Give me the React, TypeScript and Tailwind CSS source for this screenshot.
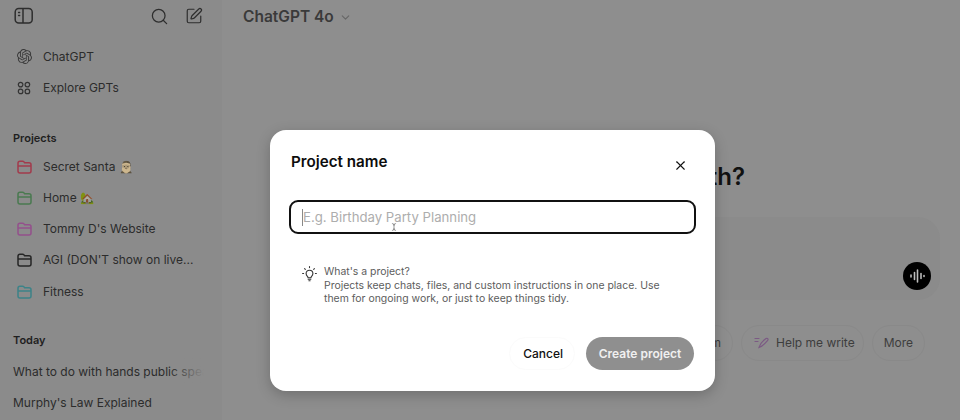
import React from "react";
import { X, Search, SquarePen, ChevronDown, TextCursor } from "lucide-react";
import { SiOpenai } from "react-icons/si";

const font = "font-['Inter','Liberation_Sans',sans-serif]";

function Folder({ color }: { color: string }) {
  return (
    <svg width="15" height="14" viewBox="0 0 15 14" fill="none" stroke={color} strokeWidth="1.5" strokeLinejoin="round" className="shrink-0">
      <path d="M1 3.2C1 2 1.8 1.2 3 1.2h2.6c.6 0 1 .2 1.4.7l.6.8h4.4c1.2 0 2 .8 2 2V11c0 1.2-.8 2-2 2H3c-1.2 0-2-.8-2-2z" />
      <path d="M1 6h13" />
    </svg>
  );
}

function Row({ icon, label }: { icon: React.ReactNode; label: React.ReactNode }) {
  return (
    <div className="flex h-[31.25px] items-center">
      <div className="box-content flex w-[26px] shrink-0 justify-start pl-[17px]">{icon}</div>
      <span className="truncate whitespace-nowrap text-[12px] text-[#2c2c2c]">{label}</span>
    </div>
  );
}

function Dots() {
  return (
    <svg width="14" height="14" viewBox="0 0 14 14" fill="none" stroke="#333" strokeWidth="1.2" className="shrink-0">
      <circle cx="3.6" cy="3.6" r="2.3" />
      <circle cx="10.4" cy="3.6" r="2.3" />
      <circle cx="3.6" cy="10.4" r="2.3" />
      <circle cx="10.4" cy="10.4" r="2.3" />
    </svg>
  );
}

function Bulb() {
  return (
    <svg width="15" height="16" viewBox="0 0 15 16" fill="none" stroke="#333" strokeWidth="1.1" strokeLinecap="round" className="mr-[7px] mt-[1px] shrink-0">
      <path d="M7.5 4.2c-2 0-3.4 1.5-3.4 3.3 0 1.2.6 2.1 1.3 2.8.4.4.6.8.6 1.4h3c0-.6.2-1 .6-1.4.7-.7 1.3-1.6 1.3-2.8 0-1.8-1.4-3.3-3.4-3.3z" />
      <path d="M6.2 13.2h2.6M6.9 14.8h1.2" />
      <path d="M7.5.6v1M2.6 2.6l.7.7M12.4 2.6l-.7.7M.6 7.5h1M13.4 7.5h1" />
    </svg>
  );
}

export default function App() {
  return (
    <div className={`relative flex h-[420px] w-[960px] overflow-hidden bg-[#8e8e8e] ${font}`}>
      <aside className="flex h-full w-[222px] shrink-0 flex-col bg-[#8b8b8b]">
        <div className="flex h-[32px] items-center pl-[14px] pr-[19px]">
          <svg width="20" height="18" viewBox="0 0 20 18" fill="none" stroke="#2e2e2e" strokeWidth="1.5">
            <rect x="1.2" y="1.5" width="17" height="14.5" rx="3.5" />
            <path d="M9 1.5v14.5" />
            <path d="M4.6 5.5h1M4.6 8.5h1" strokeLinecap="round" />
          </svg>
          <Search size={19} strokeWidth={1.6} className="ml-auto mr-[16px] text-[#2e2e2e]" />
          <SquarePen size={18} strokeWidth={1.6} className="text-[#2e2e2e]" />
        </div>
        <div className="mt-[9px]">
          <Row icon={<SiOpenai size={15} className="shrink-0 text-[#3a3a3a]" />} label="ChatGPT" />
          <Row icon={<Dots />} label="Explore GPTs" />
        </div>
        <div className="mt-[25px] flex h-[20px] items-center pl-[13px] text-[11px] font-semibold text-[#1f1f1f]">Projects</div>
        <div className="mt-[2.5px]">
          <Row icon={<Folder color="#a23b4c" />} label={<>Secret Santa <span className="text-[11.5px] sepia saturate-200 brightness-[0.62]">🎅</span></>} />
          <Row icon={<Folder color="#4a7a50" />} label={<>Home <span className="text-[11.5px] brightness-[0.7]">🏡</span></>} />
          <Row icon={<Folder color="#94508c" />} label="Tommy D's Website" />
          <Row icon={<Folder color="#262626" />} label="AGI (DON'T show on live..." />
          <Row icon={<Folder color="#3d8388" />} label="Fitness" />
        </div>
        <div className="mt-[23px] flex h-[20px] items-center pl-[13px] text-[11px] font-semibold text-[#1f1f1f]">Today</div>
        <div className="mt-[6px] pl-[13px] pr-[18px] text-[12px] text-[#2c2c2c]">
          <div className="relative flex h-[31px] items-center overflow-hidden whitespace-nowrap">
            What to do with hands public speaking
            <div className="absolute inset-y-0 right-0 w-[36px] bg-gradient-to-r from-transparent to-[#8b8b8b]" />
          </div>
          <div className="flex h-[31px] items-center">Murphy's Law Explained</div>
        </div>
      </aside>

      <main className="flex min-w-0 flex-1 flex-col">
        <div className="flex h-[34px] items-center gap-[5px] pl-[21px] text-[15.5px] font-semibold text-[#3a3a3a]">
          ChatGPT 4o
          <ChevronDown size={13} className="text-[#666]" />
        </div>
        <div className="mt-[126px] pr-[215px] text-right text-[24px] font-semibold leading-[34px] text-[#111]">What can I help with?</div>
        <div className="ml-[60px] mr-[20px] mt-[23px] flex h-[83px] items-end justify-end rounded-[22px] bg-[#8b8b8b] pb-[10px] pr-[9px]">
          <div className="flex h-[28px] w-[28px] items-center justify-center rounded-full bg-black">
            <svg width="16" height="14" viewBox="0 0 16 14" stroke="#bbb" strokeWidth="1.6" strokeLinecap="round">
              <path d="M2 6v2M5.5 3.5v7M8.5 1v12M12 4.5v5M15 6.5v1" />
            </svg>
          </div>
        </div>
        <div className="mt-[25px] flex justify-end gap-[8px] pr-[35px] text-[12px] text-[#3d3d3d]">
          <div className="flex h-[36px] items-center rounded-full border border-[#898989] px-[11px]">Brainstorm</div>
          <div className="flex h-[36px] items-center gap-[7px] rounded-full border border-[#898989] pl-[12px] pr-[8px]">
            <svg width="15" height="12" viewBox="0 0 15 12" fill="none" stroke="#7c5a84" strokeWidth="1.2" strokeLinecap="round">
              <path d="M1 1.5h4M1 4.5h3M5 10.5c1-3 4-7 7-9 2-.8 2.5 1 1.5 2.2-2 2.4-5 5.5-8.5 6.8z" />
            </svg>
            Help me write
          </div>
          <div className="flex h-[36px] items-center rounded-full border border-[#898989] px-[11px]">More</div>
        </div>
      </main>

      <div className="absolute left-[270px] top-[130px] flex h-[261px] w-[445px] flex-col rounded-[16px] bg-white px-[19px] shadow-[0_4px_14px_rgba(0,0,0,0.22)]">
        <div className="flex h-[62px] items-start justify-between pl-[2px]">
          <div className="mt-[21px] text-[15.2px] font-semibold leading-[22px] text-[#0d0d0d]">Project name</div>
          <X size={15} strokeWidth={1.8} className="mr-[8px] mt-[28px] text-[#111]" />
        </div>
        <div className="relative mt-[8px] flex h-[34px] items-center rounded-[9px] border-2 border-[#111] pl-[11px] pt-[1px] text-[13.2px] text-[#adadad]">
          <span className="h-[17px] w-px bg-[#888]" />
          E.g. Birthday Party Planning
          <TextCursor size={8} strokeWidth={1.5} className="absolute left-[99px] top-[21px] text-[#333]" />
        </div>
        <div className="mt-[31px] flex pl-[13px]">
          <Bulb />
          <div className="text-[10.45px] leading-[13.7px] text-[#5d5d5d]">
            <div>What's a project?</div>
            <div className="w-[345px]">Projects keep chats, files, and custom instructions in one place. Use them for ongoing work, or just to keep things tidy.</div>
          </div>
        </div>
        <div className="mt-[31px] flex items-center justify-end">
          <div className="flex h-[33px] items-center rounded-full border border-[#fbfbfb] pl-[13px] pr-[11px] text-[12px] font-medium text-[#111]">Cancel</div>
          <div className="ml-[11px] mr-[2px] flex h-[33px] w-[108px] items-center justify-center rounded-full bg-[#8f8f8f] text-[12px] font-semibold text-[#f0f0f0]">Create project</div>
        </div>
      </div>
    </div>
  );
}
